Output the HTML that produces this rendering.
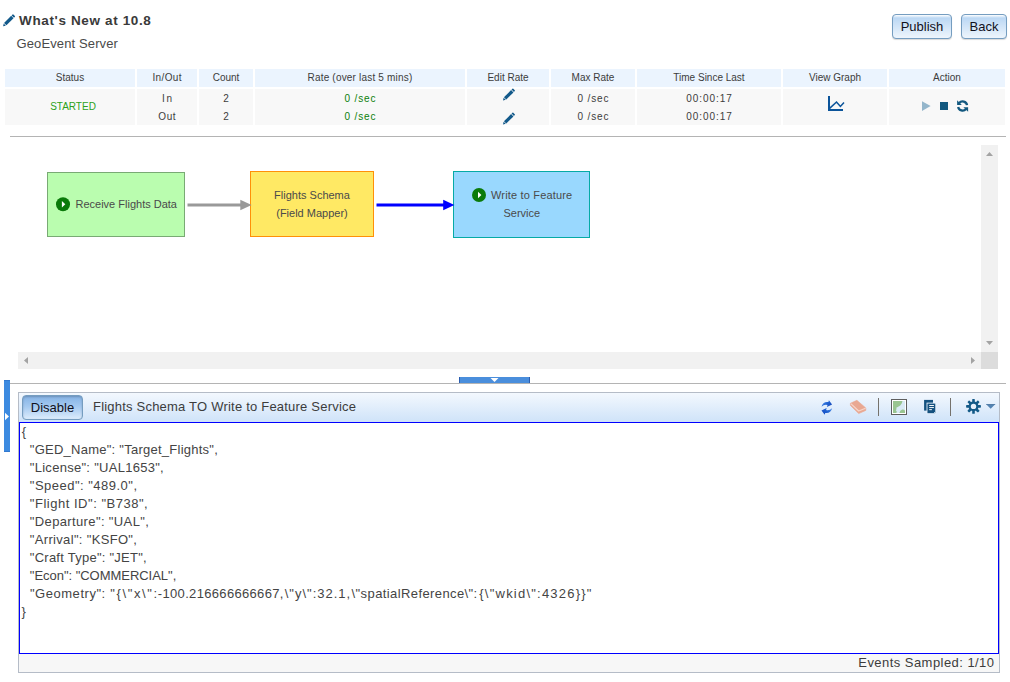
<!DOCTYPE html>
<html>
<head>
<meta charset="utf-8">
<title>GeoEvent Manager</title>
<style>
html,body{margin:0;padding:0;}
body{width:1010px;height:682px;position:relative;overflow:hidden;background:#fff;font-family:"Liberation Sans",sans-serif;color:#3c3c3c;}
.abs{position:absolute;}
.t{position:absolute;white-space:nowrap;}
/* header */
#title{left:19px;top:12px;font-size:13.5px;line-height:18px;font-weight:bold;color:#3a3a3a;letter-spacing:0.64px;}
#subtitle{left:16.5px;top:36px;font-size:13px;line-height:16px;color:#4a4a4a;letter-spacing:0.12px;}
.btn{position:absolute;box-sizing:border-box;height:25px;top:14px;border:1px solid #759dc0;border-radius:4px;background-color:#bcd8f4;background-image:linear-gradient(#ffffff 0px,rgba(255,255,255,0) 3px,rgba(255,255,255,0.75) 100%);box-shadow:0 1px 1px rgba(0,0,0,0.15);font-size:13px;line-height:23px;text-align:center;color:#10101c;}
/* table */
.th{position:absolute;top:69px;height:18px;background:#ebf4fe;font-size:10px;line-height:18px;text-align:center;color:#3c3c3c;}
.td{position:absolute;top:89px;height:36px;background:#f8f8f8;font-size:10px;text-align:center;color:#3c3c3c;}
.td .r1{position:absolute;left:0;right:0;top:1px;height:17px;line-height:17px;}
.td .r2{position:absolute;left:0;right:0;top:19px;height:17px;line-height:17px;}
.green{color:#0b800b;}
.ls8{letter-spacing:.85px;text-indent:.85px;}
.ls9{letter-spacing:.94px;text-indent:.94px;}
.hr{position:absolute;left:10px;width:996px;height:1px;background:#b4b4b4;}
/* nodes */
.node{position:absolute;box-sizing:border-box;font-size:11px;color:#4a4a4a;}
/* scrollbars */
.sb{position:absolute;background:#f1f1f1;}
/* panel */
#panel{position:absolute;left:18px;top:392px;width:982px;height:281px;box-sizing:border-box;border:1px solid #b5bcc7;background:#f7f7f7;}
#phead{position:absolute;left:0;top:0;width:980px;height:29px;background:linear-gradient(#f3f8fe,#cfe3f9);}
#ptext{position:absolute;left:0px;top:29px;width:980px;height:232px;box-sizing:border-box;border:1px solid #0000ff;background:#fff;font-size:13px;line-height:18px;color:#444;white-space:pre;}
#pfoot{position:absolute;left:0;top:261px;width:980px;height:18px;background:#f7f7f7;font-size:13px;line-height:18px;text-align:right;color:#3c3c3c;}
#disable{position:absolute;left:3px;top:2px;width:61px;height:25px;box-sizing:border-box;border:1px solid #759dc0;border-radius:4px;background:linear-gradient(#85b3e5 0%,#a4c9f0 45%,#dcecfc 100%);box-shadow:inset 0 1px 2px rgba(70,90,120,0.40);font-size:13px;line-height:23px;text-align:center;color:#10101c;}
#ptitle{left:74px;top:5px;font-size:13px;line-height:18px;color:#3c3c3c;letter-spacing:0.21px;}
#jl{position:absolute;left:-20px;top:-423px;width:0;height:0;}
.jl{position:absolute;white-space:pre;font-size:13px;line-height:18px;margin-top:423px;}
</style>
</head>
<body>

<!-- ===== header ===== -->
<div class="t" id="title">What's New at 10.8</div>
<div class="t" id="subtitle">GeoEvent Server</div>
<div class="btn" style="left:892px;width:60px;">Publish</div>
<div class="btn" style="left:961px;width:46px;">Back</div>

<!-- ===== monitor table ===== -->
<div class="th" style="left:5px;width:130px;">Status</div>
<div class="th" style="left:137px;width:60px;letter-spacing:.4px;text-indent:.4px;">In/Out</div>
<div class="th" style="left:199px;width:54px;">Count</div>
<div class="th" style="left:255px;width:210px;letter-spacing:.19px;">Rate (over last 5 mins)</div>
<div class="th" style="left:467px;width:82px;">Edit Rate</div>
<div class="th" style="left:551px;width:84px;">Max Rate</div>
<div class="th" style="left:637px;width:144px;">Time Since Last</div>
<div class="th" style="left:783px;width:104px;">View Graph</div>
<div class="th" style="left:889px;width:116px;">Action</div>

<div class="td" style="left:5px;width:130px;line-height:36px;"><span style="color:#2ba21a;position:relative;left:3px;top:0px;">STARTED</span></div>
<div class="td" style="left:137px;width:60px;"><div class="r1" style="letter-spacing:1.6px;text-indent:1.6px;">In</div><div class="r2" style="letter-spacing:.6px;text-indent:.6px;">Out</div></div>
<div class="td" style="left:199px;width:54px;"><div class="r1">2</div><div class="r2">2</div></div>
<div class="td" style="left:255px;width:210px;"><div class="r1 green ls8">0 /sec</div><div class="r2 green ls8">0 /sec</div></div>
<div class="td" style="left:467px;width:82px;"></div>
<div class="td" style="left:551px;width:84px;"><div class="r1 ls8">0 /sec</div><div class="r2 ls8">0 /sec</div></div>
<div class="td" style="left:637px;width:144px;"><div class="r1 ls9">00:00:17</div><div class="r2 ls9">00:00:17</div></div>
<div class="td" style="left:783px;width:104px;"></div>
<div class="td" style="left:889px;width:116px;"></div>

<!-- pencils (title + edit rate) -->
<svg class="abs" style="left:0;top:0" width="1010" height="130" viewBox="0 0 1010 130">
  <g fill="#12598a">
    <g transform="translate(3.1 26.3) rotate(-45)"><path d="M0 0 L2.4 -1.5 L2.4 1.5 Z"/><rect x="3.0" y="-1.65" width="10.1" height="3.3"/><path d="M13.8 -1.65 H15.0 Q15.6 -1.65 15.6 -1.05 V1.05 Q15.6 1.65 15.0 1.65 H13.8 Z"/></g>
    <g transform="translate(503.0 100.5) rotate(-45)"><path d="M0 0 L2.4 -1.5 L2.4 1.5 Z"/><rect x="3.0" y="-1.65" width="10.1" height="3.3"/><path d="M13.8 -1.65 H15.0 Q15.6 -1.65 15.6 -1.05 V1.05 Q15.6 1.65 15.0 1.65 H13.8 Z"/></g>
    <g transform="translate(503.0 124.5) rotate(-45)"><path d="M0 0 L2.4 -1.5 L2.4 1.5 Z"/><rect x="3.0" y="-1.65" width="10.1" height="3.3"/><path d="M13.8 -1.65 H15.0 Q15.6 -1.65 15.6 -1.05 V1.05 Q15.6 1.65 15.0 1.65 H13.8 Z"/></g>
  </g>
</svg>
<!-- chart icon -->
<svg class="abs" style="left:826px;top:94px" width="20" height="18" viewBox="0 0 20 18">
  <path d="M3 2 V16 H17" fill="none" stroke="#0b549a" stroke-width="2" stroke-linecap="butt" stroke-linejoin="miter"/>
  <path d="M3.6 14.4 L10.5 8.0 L14.4 12.4 L18 8.4" fill="none" stroke="#0b549a" stroke-width="1.5"/>
</svg>
<!-- action icons -->
<svg class="abs" style="left:920px;top:98px" width="52" height="17" viewBox="920 98 52 17">
  <path d="M922 101.2 L930.6 106 L922 110.9 Z" fill="#94b6cb"/>
  <rect x="940" y="102" width="8" height="8" fill="#12587f"/>
  <g transform="translate(962.6 106.05)">
    <g fill="none" stroke="#12587f" stroke-width="2.3">
      <path d="M4.45 -0.9 A4.5 4.5 0 0 0 -3.4 -3.0"/>
      <path d="M-4.45 0.9 A4.5 4.5 0 0 0 3.4 3.0"/>
    </g>
    <path d="M-5.5 -5.8 L-5.5 -1.1 L-0.8 -1.1 Z" fill="#12587f"/>
    <path d="M5.5 5.8 L5.5 1.1 L0.8 1.1 Z" fill="#12587f"/>
  </g>
</svg>

<div class="hr" style="top:136px;"></div>

<!-- ===== canvas ===== -->
<div class="node" style="left:47px;top:172px;width:138px;height:65px;background:#bafdaf;border:1px solid #79aa74;"></div>
<div class="node" style="left:250px;top:171px;width:124px;height:66px;background:#ffe964;border:1px solid #ff9008;"></div>
<div class="node" style="left:453px;top:171px;width:137px;height:67px;background:#99d8fe;border:1px solid #05aaa6;"></div>
<svg class="abs" style="left:0;top:140px" width="1010" height="240" viewBox="0 140 1010 240">
  <line x1="187.5" y1="205" x2="242" y2="205" stroke="#999999" stroke-width="3"/>
  <path d="M240.3 199.7 L251.6 205 L240.3 210.3 Z" fill="#999999"/>
  <line x1="376.5" y1="205" x2="445" y2="205" stroke="#0000ff" stroke-width="3"/>
  <path d="M443.2 199.7 L454.4 205 L443.2 210.3 Z" fill="#0000ff"/>
  <circle cx="63" cy="204.2" r="7" fill="#0a7a0a"/>
  <path d="M61.9 200.9 L65.3 204.2 L61.9 207.5 Z" fill="#fff"/>
  <circle cx="479" cy="195" r="7" fill="#0a7a0a"/>
  <path d="M478.0 191.7 L481.4 195 L478.0 198.3 Z" fill="#fff"/>
</svg>
<div class="t" style="left:75.5px;top:196px;font-size:11px;line-height:16px;color:#4a4a4a;">Receive Flights Data</div>
<div class="t" style="left:250px;width:124px;text-align:center;top:186px;font-size:11px;line-height:18px;color:#4a4a4a;">Flights Schema<br>(Field Mapper)</div>
<div class="t" style="left:491px;top:187px;font-size:11px;line-height:16px;color:#4a4a4a;letter-spacing:.17px;">Write to Feature</div>
<div class="t" style="left:503.5px;top:205px;font-size:11px;line-height:16px;color:#4a4a4a;">Service</div>

<!-- scrollbars -->
<div class="sb" style="left:981px;top:145px;width:17px;height:207px;"></div>
<div class="sb" style="left:18px;top:352px;width:963px;height:17px;"></div>
<div class="abs" style="left:981px;top:352px;width:17px;height:17px;background:#dcdcdc;"></div>
<svg class="abs" style="left:981px;top:145px" width="17" height="224" viewBox="0 0 17 224">
  <path d="M5 11 L8.5 7 L12 11 Z" fill="#a3a3a3"/>
  <path d="M5 196 L8.5 200 L12 196 Z" fill="#a3a3a3"/>
</svg>
<svg class="abs" style="left:18px;top:352px" width="963" height="17" viewBox="0 0 963 17">
  <path d="M10 5 L6 8.5 L10 12 Z" fill="#a3a3a3"/>
  <path d="M953 5 L957 8.5 L953 12 Z" fill="#a3a3a3"/>
</svg>

<!-- collapse handle -->
<div class="abs" style="left:459px;top:377px;width:71px;height:6px;background:#4a8edc;box-sizing:border-box;border-left:1px solid #2a5db0;border-right:1px solid #2a5db0;"></div>
<svg class="abs" style="left:489px;top:377px" width="12" height="6" viewBox="0 0 12 6"><path d="M1.5 1 L9.5 1 L5.5 5 Z" fill="#fff"/></svg>
<div class="hr" style="top:383px;"></div>

<!-- side handle -->
<div class="abs" style="left:4px;top:380px;width:6px;height:72px;background:#3c8ae0;box-sizing:border-box;border-top:1px solid #3279cf;border-bottom:1px solid #3279cf;"></div>
<svg class="abs" style="left:4px;top:411px" width="6" height="11" viewBox="0 0 6 11"><path d="M1 1.8 L5 5.5 L1 9.2 Z" fill="#fff"/></svg>

<!-- ===== panel ===== -->
<div id="panel">
  <div id="phead">
    <div id="disable">Disable</div>
    <div class="t" id="ptitle">Flights Schema TO Write to Feature Service</div>
    <!-- toolbar icons: coordinates relative to panel content (page x-19, y-393) -->
    <svg class="abs" style="left:795px;top:3px" width="185" height="24" viewBox="814 396 185 24">
      <defs>
        <linearGradient id="ga" x1="0" y1="0" x2="1" y2="0.4"><stop offset="0" stop-color="#5a97ea"/><stop offset="0.55" stop-color="#2468d6"/><stop offset="1" stop-color="#1a50c0"/></linearGradient>
        <linearGradient id="gb" x1="1" y1="0" x2="0" y2="0.4"><stop offset="0" stop-color="#4a8ae6"/><stop offset="0.55" stop-color="#1f62d2"/><stop offset="1" stop-color="#1850c4"/></linearGradient>
      </defs>
      <!-- refresh (two blue swoosh arrows) -->
      <path d="M821.5 406.8 Q822.8 401.4 828.4 402.1 L828.9 400.3 L832.1 404.4 L826.9 406.9 L827.5 405.0 Q824.0 404.2 821.5 406.8 Z" fill="url(#ga)"/>
      <path d="M832.1 408.2 Q830.8 413.6 825.2 412.9 L824.7 414.7 L821.5 410.6 L826.7 408.1 L826.1 410.0 Q829.6 410.8 832.1 408.2 Z" fill="url(#gb)"/>
      <!-- eraser -->
      <path d="M850.4 403.3 L856.9 400.3 L865.8 408.0 L865.8 410.4 L858.7 413.6 L850.4 405.4 Z" fill="#e9a892" stroke="#e9a892" stroke-width="0.6" stroke-linejoin="round"/>
      <path d="M850.8 403.7 L858.7 411.0 L865.6 408.2" fill="none" stroke="#f7d6ca" stroke-width="1.1" stroke-linejoin="round"/>
      <!-- separators -->
      <rect x="878" y="398" width="1" height="18" fill="#75726c"/>
      <rect x="950" y="398" width="1" height="18" fill="#75726c"/>
      <!-- map -->
      <rect x="891.5" y="399.5" width="15" height="15" fill="#ffffff" stroke="#5e5e5e" stroke-width="1"/>
      <rect x="893" y="401" width="12" height="12" fill="#d9eaf5"/>
      <path d="M893 401 L902.4 401 Q902.2 403.2 901.0 404.4 Q900.2 406.0 898.6 406.6 Q897.2 407.6 896.2 407.8 L896.6 409.0 L895.8 410.2 L896.8 411.4 L896.4 413 L893 413 Z" fill="#99c591"/>
      <path d="M905 413 L899.4 413 Q899.8 410.2 902.2 409.4 Q904.2 409.2 905 410.8 Z" fill="#99c591"/>
      <!-- copy -->
      <rect x="924.1" y="399.9" width="8.9" height="10.7" fill="#14517f"/>
      <rect x="927.0" y="403.1" width="8.8" height="10.6" fill="#14517f" stroke="#e6f0fb" stroke-width="0.9"/>
      <rect x="929.2" y="405.0" width="4.7" height="0.95" fill="#fff"/>
      <rect x="929.2" y="407.1" width="4.7" height="0.95" fill="#fff"/>
      <rect x="929.2" y="409.2" width="2.7" height="0.95" fill="#fff"/>
      <rect x="934.0" y="412.0" width="0.9" height="0.9" fill="#dfeaf5"/>
      <!-- gear -->
      <g transform="translate(973.5 406.4)" fill="#135a88">
        <circle r="4.9"/>
        <rect x="-1.3" y="-7.4" width="2.6" height="14.8" rx="0.6"/>
        <rect x="-1.3" y="-7.4" width="2.6" height="14.8" rx="0.6" transform="rotate(45)"/>
        <rect x="-1.3" y="-7.4" width="2.6" height="14.8" rx="0.6" transform="rotate(90)"/>
        <rect x="-1.3" y="-7.4" width="2.6" height="14.8" rx="0.6" transform="rotate(135)"/>
        <circle r="2.7" fill="#e6f0fb"/>
      </g>
      <!-- dropdown arrow -->
      <path d="M986.2 404.2 L995.2 404.2 L990.7 408.8 Z" fill="#5383b2"/>
      <rect x="986.2" y="404.0" width="9" height="0.7" fill="#44709c"/>
    </svg>
  </div>
  <div id="ptext"><div id="jl">
<!--JSON-->
<div class="jl" style="left:21.8px;top:0px;letter-spacing:0.00px;">{</div>
<div class="jl" style="left:29.8px;top:18px;letter-spacing:0.25px;">"GED_Name": "Target_Flights",</div>
<div class="jl" style="left:29.8px;top:36px;letter-spacing:0.28px;">"License": "UAL1653",</div>
<div class="jl" style="left:29.8px;top:54px;letter-spacing:0.49px;">"Speed": "489.0",</div>
<div class="jl" style="left:29.8px;top:72px;letter-spacing:0.52px;">"Flight ID": "B738",</div>
<div class="jl" style="left:29.8px;top:90px;letter-spacing:0.37px;">"Departure": "UAL",</div>
<div class="jl" style="left:29.8px;top:108px;letter-spacing:0.33px;">"Arrival": "KSFO",</div>
<div class="jl" style="left:29.8px;top:126px;letter-spacing:0.25px;">"Craft Type": "JET",</div>
<div class="jl" style="left:29.8px;top:144px;letter-spacing:-0.03px;">"Econ": "COMMERCIAL",</div>
<div class="jl" style="left:29.9px;top:162px;letter-spacing:0.54px;">"Geometry":</div>
<div class="jl" style="left:110.2px;top:162px;letter-spacing:1.63px;">"{\"x\":</div>
<div class="jl" style="left:157.8px;top:162px;letter-spacing:0.33px;">-100.216666666667,</div>
<div class="jl" style="left:284.7px;top:162px;letter-spacing:1.00px;">\"y\":32.1,</div>
<div class="jl" style="left:351.6px;top:162px;letter-spacing:0.40px;">\"spatialReference\":</div>
<div class="jl" style="left:479.3px;top:162px;letter-spacing:1.22px;">{\"wkid\":4326}}"</div>
<div class="jl" style="left:21.4px;top:180px;letter-spacing:0.00px;">}</div>
<!--/JSON-->
</div></div>
  <div id="pfoot"><span style="padding-right:4.5px;letter-spacing:0.45px;">Events Sampled: 1/10</span></div>
</div>

</body>
</html>
